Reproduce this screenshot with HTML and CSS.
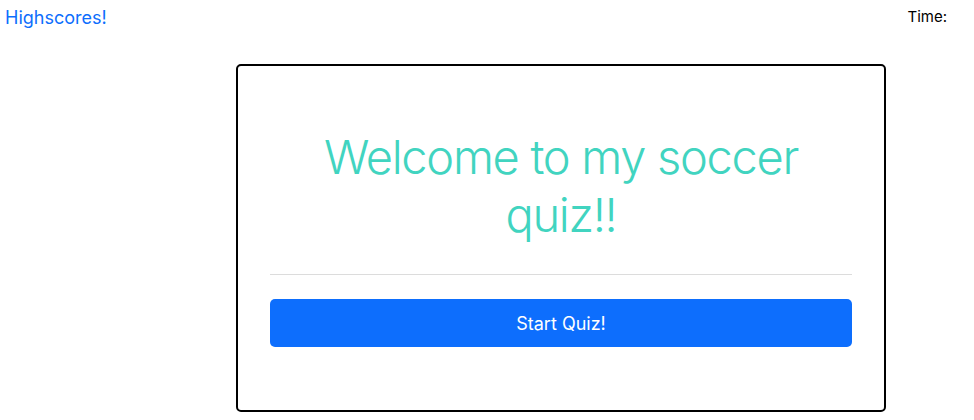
FILE: index.html
```html
<!DOCTYPE html>
<html>
<head>
<meta charset="utf-8">
<link rel="stylesheet" href="styles.css">
</head>
<body>
<header class="topbar">
  <a class="highscores" href="#">Highscores!</a>
  <div class="timer">Time: <span class="time-left"></span></div>
</header>
<main class="quiz-card">
  <h1 class="title">Welcome to my soccer quiz!!</h1>
  <hr class="divider">
  <button class="start-btn">Start Quiz!</button>
</main>
</body>
</html>
```
FILE: styles.css
```css
* { box-sizing: border-box; }
body {
  margin: 0;
  font-family: "Liberation Sans", Arial, sans-serif;
  background: #fff;
  color: #000;
}
.topbar {
  display: flex;
  justify-content: space-between;
  align-items: flex-start;
  padding: 6px 27px 0 5px;
  height: 64px;
}
.highscores {
  color: #0d6efd;
  text-decoration: none;
  font-family: "Inter", "Liberation Sans", sans-serif;
  font-size: 18px;
  line-height: 24px;
}
.timer {
  font-family: "Inter", "Liberation Sans", sans-serif;
  font-size: 15px;
  line-height: 20px;
  padding-top: 1px;
}
.quiz-card {
  width: 650px;
  height: 348px;
  margin-left: 236px;
  border: 2px solid #000;
  border-radius: 5px;
  padding: 62px 32px 32px;
  display: flex;
  flex-direction: column;
}
.title {
  margin: 0;
  font-family: "Inter", "Liberation Sans", sans-serif;
  font-weight: 300;
  font-size: 47px;
  letter-spacing: -1.3px;
  line-height: 57.6px;
  text-align: center;
  color: #41d4c0;
}
.divider {
  margin: 31px 0 24px;
  border: 0;
  border-top: 1px solid #dcdcdc;
}
.start-btn {
  height: 48px;
  background: #0d6efd;
  color: #fff;
  border: 0;
  border-radius: 5px;
  font-family: "Inter", "Liberation Sans", sans-serif;
  font-size: 18px;
}
```
